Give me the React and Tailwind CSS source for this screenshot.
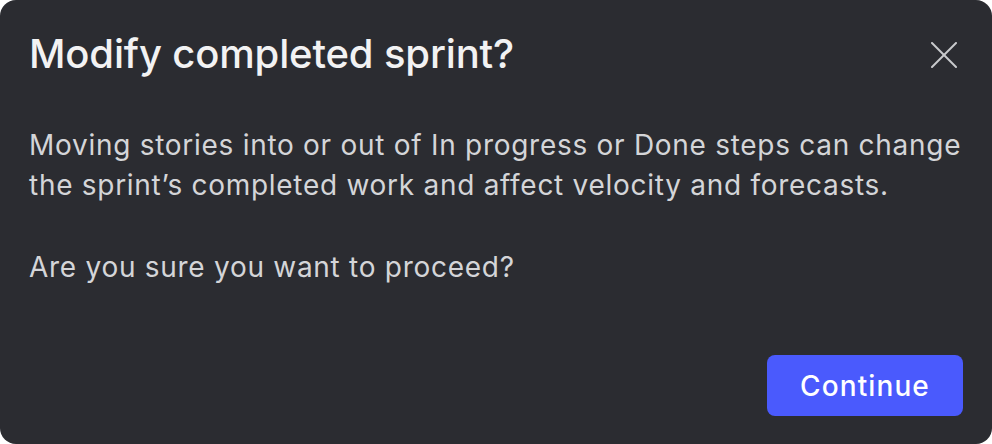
import React from 'react';

const App = () => {
    return (
        <div className="w-[992px] h-[444px] bg-white" style={{ fontFamily: 'Inter, "Noto Sans", sans-serif' }}>
            <div className="h-full bg-[#2b2c31] rounded-[16px] flex flex-col px-[29px] pt-[30px] pb-[28px]">
                <div className="flex items-start justify-between">
                    <h1 className="text-[40px] leading-[48px] font-medium tracking-[-0.15px] text-[#f2f2f3]">
                        Modify completed sprint?
                    </h1>
                    <button className="mt-[12px] mr-[6px] text-[#c9cacd]">
                        <svg width="26" height="26" viewBox="0 0 26 26" fill="none" stroke="currentColor" strokeWidth="2" strokeLinecap="round">
                            <path d="M1 1 25 25" />
                            <path d="M25 1 1 25" />
                        </svg>
                    </button>
                </div>
                <div className="mt-[47px] text-[28px] leading-[40px] tracking-[0.72px] text-[#d4d5d8]">
                    <p>
                        Moving stories into or out of In progress or Done steps can change
                        <br />
                        the sprint’s completed work and affect velocity and forecasts.
                    </p>
                    <p className="mt-[42px]">Are you sure you want to proceed?</p>
                </div>
                <div className="mt-auto flex justify-end">
                    <button className="w-[196px] h-[61px] rounded-[8px] bg-[#4a5afd] text-white text-[28px] font-medium tracking-[1.1px]">
                        Continue
                    </button>
                </div>
            </div>
        </div>
    );
};

export default App;
